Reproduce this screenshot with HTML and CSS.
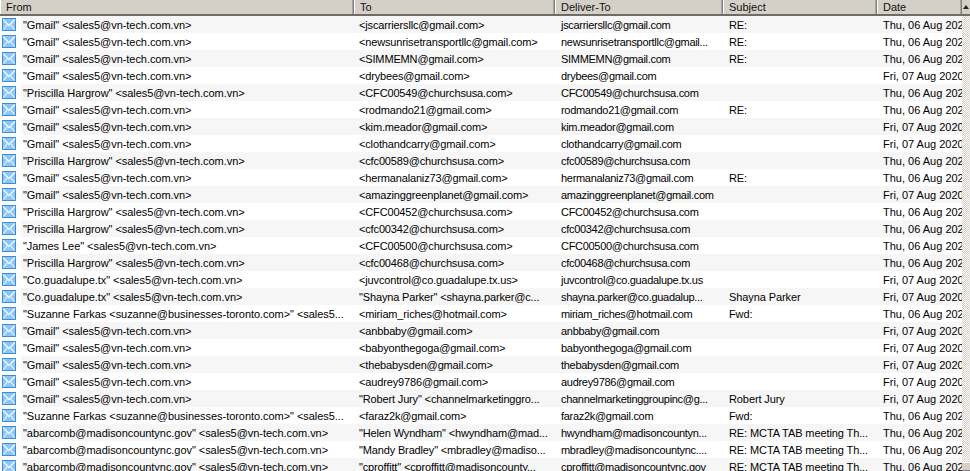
FILE: index.html
```html
<!DOCTYPE html>
<html lang="en">
<head>
<meta charset="UTF-8">
<title>Messages</title>
<link rel="stylesheet" href="styles.css">
</head>
<body>
<svg class="defs" width="0" height="0">
  <symbol id="mail" viewBox="0 0 14 13">
    <rect x="0.5" y="0.5" width="13" height="12" fill="#8cc6f4" stroke="#3a8ce0"/>
    <path d="M1 1.5 L7 7.5 L13 1.5" fill="none" stroke="#f2faff" stroke-width="1.3"/>
    <path d="M1.5 11.5 L5.5 6.5 M12.5 11.5 L8.5 6.5" fill="none" stroke="#f2faff" stroke-width="1.1"/>
  </symbol>
</svg>
<div class="list">
  <div class="head">
    <div class="hcell from">From</div>
    <div class="hcell to">To</div>
    <div class="hcell deliver">Deliver-To</div>
    <div class="hcell subject">Subject</div>
    <div class="hcell date">Date</div>
    <div class="sort"><span class="arrow"></span></div>
  </div>
  <div class="body">
    <div class="rows">
      <div class="row"><svg class="ico"><use href="#mail"/></svg><div class="c from">"Gmail" &lt;sales5@vn-tech.com.vn&gt;</div><div class="c to">&lt;jscarriersllc@gmail.com&gt;</div><div class="c deliver">jscarriersllc@gmail.com</div><div class="c subject">RE:</div><div class="c date">Thu, 06 Aug 2020</div></div>
      <div class="row"><svg class="ico"><use href="#mail"/></svg><div class="c from">"Gmail" &lt;sales5@vn-tech.com.vn&gt;</div><div class="c to">&lt;newsunrisetransportllc@gmail.com&gt;</div><div class="c deliver">newsunrisetransportllc@gmail...</div><div class="c subject">RE:</div><div class="c date">Thu, 06 Aug 2020</div></div>
      <div class="row"><svg class="ico"><use href="#mail"/></svg><div class="c from">"Gmail" &lt;sales5@vn-tech.com.vn&gt;</div><div class="c to">&lt;SIMMEMN@gmail.com&gt;</div><div class="c deliver">SIMMEMN@gmail.com</div><div class="c subject">RE:</div><div class="c date">Thu, 06 Aug 2020</div></div>
      <div class="row"><svg class="ico"><use href="#mail"/></svg><div class="c from">"Gmail" &lt;sales5@vn-tech.com.vn&gt;</div><div class="c to">&lt;drybees@gmail.com&gt;</div><div class="c deliver">drybees@gmail.com</div><div class="c subject"></div><div class="c date">Fri, 07 Aug 2020</div></div>
      <div class="row"><svg class="ico"><use href="#mail"/></svg><div class="c from">"Priscilla Hargrow" &lt;sales5@vn-tech.com.vn&gt;</div><div class="c to">&lt;CFC00549@churchsusa.com&gt;</div><div class="c deliver">CFC00549@churchsusa.com</div><div class="c subject"></div><div class="c date">Thu, 06 Aug 2020</div></div>
      <div class="row"><svg class="ico"><use href="#mail"/></svg><div class="c from">"Gmail" &lt;sales5@vn-tech.com.vn&gt;</div><div class="c to">&lt;rodmando21@gmail.com&gt;</div><div class="c deliver">rodmando21@gmail.com</div><div class="c subject">RE:</div><div class="c date">Thu, 06 Aug 2020</div></div>
      <div class="row"><svg class="ico"><use href="#mail"/></svg><div class="c from">"Gmail" &lt;sales5@vn-tech.com.vn&gt;</div><div class="c to">&lt;kim.meador@gmail.com&gt;</div><div class="c deliver">kim.meador@gmail.com</div><div class="c subject"></div><div class="c date">Fri, 07 Aug 2020</div></div>
      <div class="row"><svg class="ico"><use href="#mail"/></svg><div class="c from">"Gmail" &lt;sales5@vn-tech.com.vn&gt;</div><div class="c to">&lt;clothandcarry@gmail.com&gt;</div><div class="c deliver">clothandcarry@gmail.com</div><div class="c subject"></div><div class="c date">Fri, 07 Aug 2020</div></div>
      <div class="row"><svg class="ico"><use href="#mail"/></svg><div class="c from">"Priscilla Hargrow" &lt;sales5@vn-tech.com.vn&gt;</div><div class="c to">&lt;cfc00589@churchsusa.com&gt;</div><div class="c deliver">cfc00589@churchsusa.com</div><div class="c subject"></div><div class="c date">Thu, 06 Aug 2020</div></div>
      <div class="row"><svg class="ico"><use href="#mail"/></svg><div class="c from">"Gmail" &lt;sales5@vn-tech.com.vn&gt;</div><div class="c to">&lt;hermanalaniz73@gmail.com&gt;</div><div class="c deliver">hermanalaniz73@gmail.com</div><div class="c subject">RE:</div><div class="c date">Thu, 06 Aug 2020</div></div>
      <div class="row"><svg class="ico"><use href="#mail"/></svg><div class="c from">"Gmail" &lt;sales5@vn-tech.com.vn&gt;</div><div class="c to">&lt;amazinggreenplanet@gmail.com&gt;</div><div class="c deliver">amazinggreenplanet@gmail.com</div><div class="c subject"></div><div class="c date">Fri, 07 Aug 2020</div></div>
      <div class="row"><svg class="ico"><use href="#mail"/></svg><div class="c from">"Priscilla Hargrow" &lt;sales5@vn-tech.com.vn&gt;</div><div class="c to">&lt;CFC00452@churchsusa.com&gt;</div><div class="c deliver">CFC00452@churchsusa.com</div><div class="c subject"></div><div class="c date">Thu, 06 Aug 2020</div></div>
      <div class="row"><svg class="ico"><use href="#mail"/></svg><div class="c from">"Priscilla Hargrow" &lt;sales5@vn-tech.com.vn&gt;</div><div class="c to">&lt;cfc00342@churchsusa.com&gt;</div><div class="c deliver">cfc00342@churchsusa.com</div><div class="c subject"></div><div class="c date">Thu, 06 Aug 2020</div></div>
      <div class="row"><svg class="ico"><use href="#mail"/></svg><div class="c from">"James Lee" &lt;sales5@vn-tech.com.vn&gt;</div><div class="c to">&lt;CFC00500@churchsusa.com&gt;</div><div class="c deliver">CFC00500@churchsusa.com</div><div class="c subject"></div><div class="c date">Thu, 06 Aug 2020</div></div>
      <div class="row"><svg class="ico"><use href="#mail"/></svg><div class="c from">"Priscilla Hargrow" &lt;sales5@vn-tech.com.vn&gt;</div><div class="c to">&lt;cfc00468@churchsusa.com&gt;</div><div class="c deliver">cfc00468@churchsusa.com</div><div class="c subject"></div><div class="c date">Thu, 06 Aug 2020</div></div>
      <div class="row"><svg class="ico"><use href="#mail"/></svg><div class="c from">"Co.guadalupe.tx" &lt;sales5@vn-tech.com.vn&gt;</div><div class="c to">&lt;juvcontrol@co.guadalupe.tx.us&gt;</div><div class="c deliver">juvcontrol@co.guadalupe.tx.us</div><div class="c subject"></div><div class="c date">Fri, 07 Aug 2020</div></div>
      <div class="row"><svg class="ico"><use href="#mail"/></svg><div class="c from">"Co.guadalupe.tx" &lt;sales5@vn-tech.com.vn&gt;</div><div class="c to">"Shayna Parker" &lt;shayna.parker@c...</div><div class="c deliver">shayna.parker@co.guadalup...</div><div class="c subject">Shayna Parker</div><div class="c date">Fri, 07 Aug 2020</div></div>
      <div class="row"><svg class="ico"><use href="#mail"/></svg><div class="c from">"Suzanne Farkas &lt;suzanne@businesses-toronto.com&gt;" &lt;sales5...</div><div class="c to">&lt;miriam_riches@hotmail.com&gt;</div><div class="c deliver">miriam_riches@hotmail.com</div><div class="c subject">Fwd:</div><div class="c date">Thu, 06 Aug 2020</div></div>
      <div class="row"><svg class="ico"><use href="#mail"/></svg><div class="c from">"Gmail" &lt;sales5@vn-tech.com.vn&gt;</div><div class="c to">&lt;anbbaby@gmail.com&gt;</div><div class="c deliver">anbbaby@gmail.com</div><div class="c subject"></div><div class="c date">Fri, 07 Aug 2020</div></div>
      <div class="row"><svg class="ico"><use href="#mail"/></svg><div class="c from">"Gmail" &lt;sales5@vn-tech.com.vn&gt;</div><div class="c to">&lt;babyonthegoga@gmail.com&gt;</div><div class="c deliver">babyonthegoga@gmail.com</div><div class="c subject"></div><div class="c date">Fri, 07 Aug 2020</div></div>
      <div class="row"><svg class="ico"><use href="#mail"/></svg><div class="c from">"Gmail" &lt;sales5@vn-tech.com.vn&gt;</div><div class="c to">&lt;thebabysden@gmail.com&gt;</div><div class="c deliver">thebabysden@gmail.com</div><div class="c subject"></div><div class="c date">Fri, 07 Aug 2020</div></div>
      <div class="row"><svg class="ico"><use href="#mail"/></svg><div class="c from">"Gmail" &lt;sales5@vn-tech.com.vn&gt;</div><div class="c to">&lt;audrey9786@gmail.com&gt;</div><div class="c deliver">audrey9786@gmail.com</div><div class="c subject"></div><div class="c date">Fri, 07 Aug 2020</div></div>
      <div class="row"><svg class="ico"><use href="#mail"/></svg><div class="c from">"Gmail" &lt;sales5@vn-tech.com.vn&gt;</div><div class="c to">"Robert Jury" &lt;channelmarketinggro...</div><div class="c deliver">channelmarketinggroupinc@g...</div><div class="c subject">Robert Jury</div><div class="c date">Fri, 07 Aug 2020</div></div>
      <div class="row"><svg class="ico"><use href="#mail"/></svg><div class="c from">"Suzanne Farkas &lt;suzanne@businesses-toronto.com&gt;" &lt;sales5...</div><div class="c to">&lt;faraz2k@gmail.com&gt;</div><div class="c deliver">faraz2k@gmail.com</div><div class="c subject">Fwd:</div><div class="c date">Thu, 06 Aug 2020</div></div>
      <div class="row"><svg class="ico"><use href="#mail"/></svg><div class="c from">"abarcomb@madisoncountync.gov" &lt;sales5@vn-tech.com.vn&gt;</div><div class="c to">"Helen Wyndham" &lt;hwyndham@mad...</div><div class="c deliver">hwyndham@madisoncountyn...</div><div class="c subject">RE: MCTA TAB meeting Th...</div><div class="c date">Thu, 06 Aug 2020</div></div>
      <div class="row"><svg class="ico"><use href="#mail"/></svg><div class="c from">"abarcomb@madisoncountync.gov" &lt;sales5@vn-tech.com.vn&gt;</div><div class="c to">"Mandy Bradley" &lt;mbradley@madiso...</div><div class="c deliver">mbradley@madisoncountync....</div><div class="c subject">RE: MCTA TAB meeting Th...</div><div class="c date">Thu, 06 Aug 2020</div></div>
      <div class="row"><svg class="ico"><use href="#mail"/></svg><div class="c from">"abarcomb@madisoncountync.gov" &lt;sales5@vn-tech.com.vn&gt;</div><div class="c to">"cproffitt" &lt;cproffitt@madisoncounty...</div><div class="c deliver">cproffitt@madisoncountync.gov</div><div class="c subject">RE: MCTA TAB meeting Th...</div><div class="c date">Thu, 06 Aug 2020</div></div>
    </div>
    <div class="scroll"><div class="thumb"></div></div>
  </div>
</div>
</body>
</html>
```

FILE: styles.css
```css
html, body {
    margin: 0;
    height: 100%;
    overflow: hidden;
    background: #fff;
}

.defs {
    display: block;
}

.list {
    height: 471px;
    overflow: hidden;
    font-family: "Liberation Sans", Arial, sans-serif;
    font-size: 11px;
    color: #000;
    display: flex;
    flex-direction: column;
}

.head {
    display: flex;
    height: 14px;
    flex: none;
    background: #d4d0c8;
    border-bottom: 2px solid #6e6c66;
    line-height: 15px;
    color: #111;
}

.hcell {
    box-sizing: border-box;
    padding-left: 6px;
    border-right: 1px solid #808080;
    box-shadow: inset -1px 0 0 #a8a59e, inset 1px 0 0 #fff;
    white-space: nowrap;
    overflow: hidden;
}

.hcell.from { width: 354px; }
.hcell.to { width: 201px; }
.hcell.deliver { width: 168px; }
.hcell.subject { width: 154px; }
.hcell.date { width: 85px; }

.sort {
    flex: 1;
    display: flex;
    align-items: center;
    justify-content: center;
}

.arrow {
    border-left: 3px solid transparent;
    border-right: 3px solid transparent;
    border-bottom: 4px solid #222;
}

.body {
    flex: 1;
    display: flex;
    min-height: 0;
}

.rows {
    width: 962px;
    flex: none;
}

.row {
    display: flex;
    height: 17px;
    line-height: 19px;
    white-space: nowrap;
}

.ico {
    width: 14px;
    height: 13px;
    flex: none;
    margin: 2px 5px 2px 2px;
}

.c {
    height: 17px;
    overflow: hidden;
    box-sizing: border-box;
}

.c.from { width: 334px; padding-left: 2px; letter-spacing: -0.05px; }
.c.to { width: 204px; padding-left: 4px; letter-spacing: -0.15px; }
.c.deliver { width: 168px; padding-left: 2px; letter-spacing: -0.3px; }
.c.subject { width: 154px; padding-left: 2px; letter-spacing: -0.1px; }
.c.date { width: 81px; padding-left: 2px; }

.row:nth-child(odd) .c {
    background: #f6f6f6;
}

.scroll {
    flex: 1;
    display: flex;
    flex-direction: column;
    justify-content: flex-end;
    background: repeating-conic-gradient(#d4d0c8 0 25%, #fff 0 50%) 0 0 / 2px 2px;
}

.thumb {
    height: 7px;
    background: #d4d0c8;
    border-top: 1px solid #fff;
    border-bottom: 1px solid #808080;
}
```
